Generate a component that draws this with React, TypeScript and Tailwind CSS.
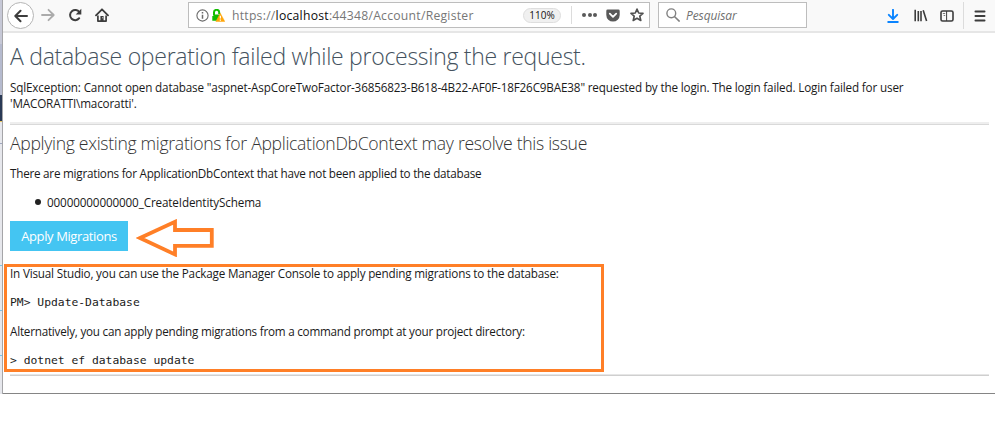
import React from "react";

const ICON = "#3d3d3d";

interface LineProps {
  children: React.ReactNode;
  className?: string;
}

// One unwrapped line of page text
const Line: React.FC<LineProps> = ({ children, className = "" }) => (
  <span className={`block whitespace-nowrap ${className}`}>{children}</span>
);

const BackIcon = () => (
  <svg width="14" height="14" viewBox="0 0 14 14" fill="none" stroke="currentColor" strokeWidth="2" strokeLinecap="round" strokeLinejoin="round">
    <path d="M13 7H1.5M6.5 1.8L1.3 7l5.2 5.2" />
  </svg>
);

const ForwardIcon = () => (
  <svg width="14" height="14" viewBox="0 0 14 14" fill="none" stroke="currentColor" strokeWidth="1.8" strokeLinecap="round" strokeLinejoin="round">
    <path d="M1 7h11.5M7.5 1.8L12.7 7l-5.2 5.2" />
  </svg>
);

const ReloadIcon = () => (
  <svg width="14" height="14" viewBox="0 0 14 14" fill="none">
    <path d="M11.2 10.2A5.1 5.1 0 1 1 11.4 4.2" stroke={ICON} strokeWidth="2" strokeLinecap="round" />
    <path d="M13.3 0.8v5.6H7.7z" fill={ICON} />
  </svg>
);

const HomeIcon = () => (
  <svg width="14" height="14" viewBox="0 0 14 14" fill="none" stroke={ICON}>
    <path d="M1 7.4L7 1.3l6 6.1" strokeWidth="1.8" strokeLinecap="round" strokeLinejoin="round" />
    <path d="M2.9 7.5v5.6h8.2V7.5" strokeWidth="1.7" strokeLinejoin="round" />
    <path d="M5.4 8h3.2v5H5.4z" fill={ICON} stroke="none" />
    <path d="M7.3 9.3h.8v.9h-.8z" fill="#fff" stroke="none" />
  </svg>
);

const InfoIcon = () => (
  <svg width="13" height="13" viewBox="0 0 13 13" fill="none" stroke="#6b6b6b">
    <circle cx="6.5" cy="6.5" r="5.6" strokeWidth="1.1" />
    <path d="M6.5 5.7v4M6.5 3.1v1.4" strokeWidth="1.5" />
  </svg>
);

// Open padlock with a warning triangle over its corner
const LockWarningIcon = () => (
  <svg width="13" height="13" viewBox="0 0 13 13">
    <path d="M2 6.5V3.6a2.6 2.6 0 0 1 5.2-.3V5" fill="none" stroke="#12bc00" strokeWidth="2" />
    <path d="M0.3 7h1.3V5.6h7v6.2H.3z" fill="#12bc00" />
    <path d="M8.3 4.2l4.5 8.4H3.9z" fill="#ffa60a" stroke="#ffa60a" strokeWidth="0.5" strokeLinejoin="round" />
    <path d="M8.35 6.8v2.8M8.35 10.4v1.3" stroke="#fff" strokeWidth="1.2" />
  </svg>
);

const PocketIcon = () => (
  <svg width="14" height="13" viewBox="0 0 14 13">
    <path d="M1.6.6h10.8a1.3 1.3 0 0 1 1.3 1.3v4a6.7 6.7 0 0 1-13.4 0v-4A1.3 1.3 0 0 1 1.6.6z" fill="#595959" />
    <path d="M3.8 4.7L7 7.8l3.2-3.1" fill="none" stroke="#fff" strokeWidth="1.8" strokeLinecap="round" strokeLinejoin="round" />
  </svg>
);

const StarIcon = () => (
  <svg width="14" height="14" viewBox="0 0 14 14">
    <path d="M7 1.1l1.7 3.9 4.3.4-3.2 2.8 1 4.3L7 10.2l-3.8 2.3 1-4.3L1 5.4l4.3-.4z" fill="none" stroke="#505050" strokeWidth="1.6" strokeLinejoin="round" />
  </svg>
);

const SearchIcon = () => (
  <svg width="14" height="14" viewBox="0 0 14 14" fill="none" stroke="#808080" strokeLinecap="round">
    <circle cx="5.3" cy="5.3" r="4.4" strokeWidth="1.4" />
    <path d="M8.7 8.7l4.5 4.4" strokeWidth="1.5" />
  </svg>
);

const DownloadIcon = () => (
  <svg width="12" height="14" viewBox="0 0 12 14" fill="none" stroke="#0a84ff" strokeWidth="1.9">
    <path d="M6 .8v8.7M1.8 5.8L6 10l4.2-4.2M1.2 13h9.6" strokeLinecap="round" strokeLinejoin="round" />
  </svg>
);

const LibraryIcon = () => (
  <svg width="14" height="13" viewBox="0 0 14 13" fill="none" stroke={ICON}>
    <path d="M1.2.7v11.6M4.3 2v10.3M7 2v10.3M9.2 1.2l3.4 10.8" strokeWidth="1.6" />
  </svg>
);

const SidebarIcon = () => (
  <svg width="14" height="12" viewBox="0 0 14 12" fill="none" stroke={ICON}>
    <rect x="1" y="1" width="12" height="10" rx="1.6" strokeWidth="1.6" />
    <path d="M6.6 1v10" strokeWidth="1" />
    <path d="M2.8 3.5h2.4M3.6 5.5h1.6" strokeWidth="1" stroke="#777" />
  </svg>
);

const MenuIcon = () => (
  <svg width="12" height="12" viewBox="0 0 12 12" stroke={ICON} strokeWidth="1.8">
    <path d="M1.4 1.5h9.2M1.4 6h9.2M1.4 10.5h9.2" strokeLinecap="round" />
  </svg>
);

const Toolbar = () => (
  <div className="flex h-[33px] shrink-0 items-start border-b-2 border-[#e6e6e6] bg-[#f9f9f9]">
    <div className="ml-1 mt-0.5 flex size-[27px] items-center justify-center rounded-full border border-[#b5b5b5] bg-white text-[#3d3d3d]">
      <BackIcon />
    </div>
    <div className="ml-[7px] mt-2 flex gap-[13px] text-[#ababab]">
      <ForwardIcon />
      <ReloadIcon />
      <HomeIcon />
    </div>
    <div className="ml-[79px] mt-0.5 flex h-[26px] w-[462px] items-center border border-[#bdbdbd] bg-white">
      <div className="ml-[7px] flex items-center gap-[3px]">
        <InfoIcon />
        <LockWarningIcon />
      </div>
      <span className="ml-[7px] w-[291px] whitespace-nowrap pt-[2px] text-[12.2px] tracking-[0.25px] text-[#777]">
        https://<span className="text-[#0c0c0d]">localhost</span>:44348/Account/Register
      </span>
      <span className="flex h-[15px] w-[38px] items-center justify-center rounded-full border border-[#dedede] bg-[#f0f0f0] pt-px text-[10px] text-[#111]">
        110%
      </span>
      <span className="ml-[10px] h-[18px] w-px bg-[#dcdcdc]" />
      <span className="ml-[10px] flex gap-[1.5px]">
        <i className="size-[4px] rounded-full bg-[#595959]" />
        <i className="size-[4px] rounded-full bg-[#595959]" />
        <i className="size-[4px] rounded-full bg-[#595959]" />
      </span>
      <span className="ml-[9px] flex items-center gap-[10px]">
        <PocketIcon />
        <StarIcon />
      </span>
    </div>
    <div className="ml-2 mt-0.5 flex h-[26px] w-[149px] items-center border border-[#bdbdbd] bg-white pl-[7px]">
      <SearchIcon />
      <span className="ml-[6px] pt-[2px] text-[12px] italic tracking-[-0.1px] text-[#707070]">Pesquisar</span>
    </div>
    <div className="ml-[80px] mt-0.5 flex h-[27px] items-center">
      <DownloadIcon />
      <span className="ml-[15px]"><LibraryIcon /></span>
      <span className="ml-[12px]"><SidebarIcon /></span>
      <span className="ml-[9px] h-[27px] w-px bg-[#dcdcdc]" />
      <span className="ml-[10px]"><MenuIcon /></span>
    </div>
  </div>
);

// Sliver of the window that sits behind the browser
const WindowEdge = () => (
  <div className="flex h-[394px] w-[3px] shrink-0">
    <div className="flex w-[2px] flex-col bg-[#e6e7ec]">
      <div className="h-[44px] bg-[#c6c8d6]" />
      <div className="h-[51px] bg-[#b5bace]" />
      <div className="h-[26px] bg-[#293955]" />
      <div className="h-px bg-[#e8c860]" />
      <div className="mt-[21px] h-px bg-[#9fa6bd]" />
      <div className="mt-[121px] h-px bg-[#7cc4e8]" />
      <div className="mt-[44px] h-px bg-[#7cc4e8]" />
      <div className="mt-[44px] h-px bg-[#7cc4e8]" />
    </div>
    <div className="w-px bg-[#a5a5a8]" />
  </div>
);

const ArrowCallout = () => (
  <svg className="ml-[8px] mt-[3px]" width="80" height="38" viewBox="0 0 80 38">
    <path d="M4 19L39 2.8v8.2h36.8v15.8H39v8.6z" fill="#fff" stroke="#ff7f27" strokeWidth="3.8" />
  </svg>
);

export default function App() {
  return (
    <div className="flex h-[446px] w-[995px] flex-col overflow-hidden bg-white font-['Open_Sans','Noto_Sans',sans-serif] text-[#1a1a1a]">
      <div className="flex h-[394px] border-b border-[#858585]">
        <WindowEdge />
        <div className="flex w-[992px] flex-col">
          <Toolbar />
          <main className="flex flex-col pl-[7px] pr-[6px]">
            <h1 className="mt-[7px] text-[23px] font-light leading-8 tracking-[-0.28px] text-[#44525e]">
              <Line>A database operation failed while processing the request.</Line>
            </h1>
            <p className="mt-[7px] text-[11.7px] leading-[16px]">
              <Line className="tracking-[-0.158px]">
                SqlException: Cannot open database "aspnet-AspCoreTwoFactor-36856823-B618-4B22-AF0F-18F26C9BAE38" requested by the login. The login failed. Login failed for user
              </Line>
              <Line className="tracking-[-0.16px]">'MACORATTI\macoratti'.</Line>
            </p>
            <hr className="mt-[11px] h-[3px] border-0 border-b border-[#d9d9d9] bg-[#eee]" />
            <h2 className="mt-[6px] text-[17.6px] font-light leading-6 tracking-[-0.31px] text-[#333]">
              <Line>Applying existing migrations for ApplicationDbContext may resolve this issue</Line>
            </h2>
            <p className="mt-[10px] text-[11.7px] leading-[16px] tracking-[-0.24px]">
              <Line>There are migrations for ApplicationDbContext that have not been applied to the database</Line>
            </p>
            <ul className="mt-[13px] flex items-center pl-[25px] text-[11.7px] leading-[16px]">
              <li className="flex items-center gap-[6px]">
                <i className="size-[6px] rounded-full bg-[#222]" />
                <Line className="tracking-[-0.135px]">00000000000000_CreateIdentitySchema</Line>
              </li>
            </ul>
            <div className="mt-[7px] flex h-[38px] items-center">
              <button className="h-[30px] w-[118px] bg-[#44c5f2] pt-[2px] text-[13px] tracking-[-0.38px] text-white">
                <Line>Apply Migrations</Line>
              </button>
              <ArrowCallout />
            </div>
            <section className="-ml-[6px] mt-[9px] h-[108px] w-[600px] border-[3px] border-[#ff7f27] pl-[3px] text-[11.7px] leading-[16px]">
              <Line className="-mt-[2px] tracking-[-0.19px]">In Visual Studio, you can use the Package Manager Console to apply pending migrations to the database:</Line>
              <code className="mt-[13px] block font-['DejaVu_Sans_Mono',monospace] text-[11.35px]">PM&gt; Update-Database</code>
              <Line className="mt-[13px] tracking-[-0.23px]">Alternatively, you can apply pending migrations from a command prompt at your project directory:</Line>
              <code className="mt-[13px] block font-['DejaVu_Sans_Mono',monospace] text-[11.35px]">&gt; dotnet ef database update</code>
            </section>
            <hr className="mt-[2px] h-[2px] border-0 border-b border-[#cfcfcf] bg-[#e6e6e6]" />
          </main>
        </div>
      </div>
    </div>
  );
}
